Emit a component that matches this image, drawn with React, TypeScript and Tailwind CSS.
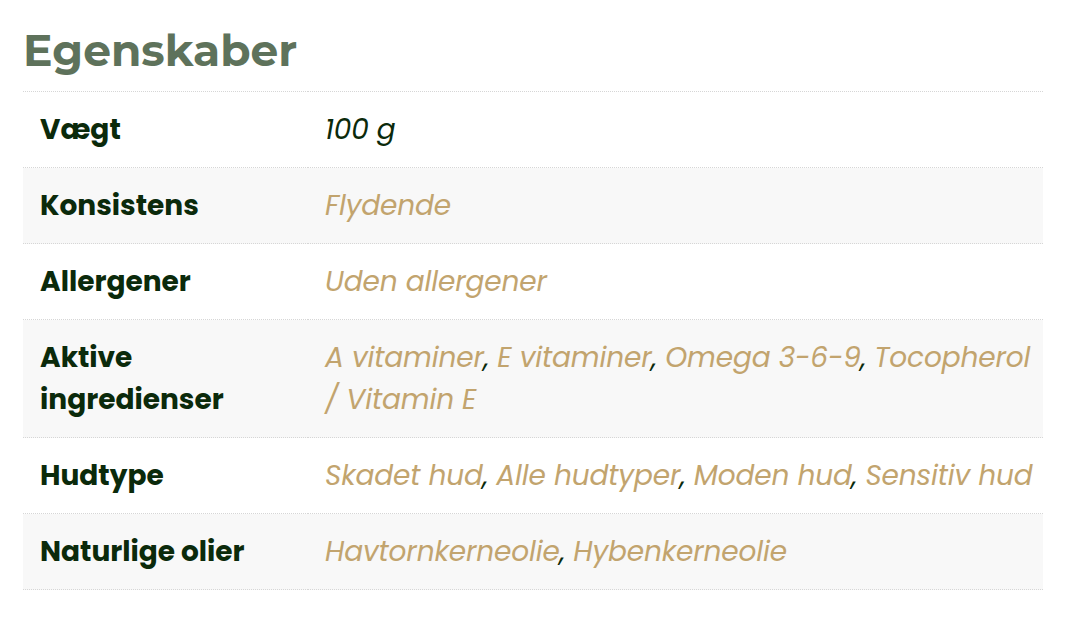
import React from 'react';

type Row = { label: string; values: string[]; plain?: boolean };

const rows: Row[] = [
  { label: 'Vægt', values: ['100 g'], plain: true },
  { label: 'Konsistens', values: ['Flydende'] },
  { label: 'Allergener', values: ['Uden allergener'] },
  { label: 'Aktive ingredienser', values: ['A vitaminer', 'E vitaminer', 'Omega 3-6-9', 'Tocopherol / Vitamin E'] },
  { label: 'Hudtype', values: ['Skadet hud', 'Alle hudtyper', 'Moden hud', 'Sensitiv hud'] },
  { label: 'Naturlige olier', values: ['Havtornkerneolie', 'Hybenkerneolie'] },
];

const App: React.FC = () => {
  return (
    <div className="min-h-screen bg-white pl-[23px] pr-[45px] pt-[22px]">
      <h2 className="text-[44px] font-bold leading-[56px] text-[#5e725b] font-['Montserrat','DejaVu_Sans',sans-serif]">
        Egenskaber
      </h2>
      <table className="mt-[13px] w-full table-fixed border-collapse font-['Poppins','DejaVu_Sans',sans-serif] text-[28px] leading-[42px]">
        <colgroup>
          <col className="w-[285px]" />
          <col />
        </colgroup>
        <tbody>
          {rows.map((row, i) => (
            <tr
              key={row.label}
              className={`border-t border-b border-dotted border-[#d6d6d6] ${i % 2 === 1 ? 'bg-[#f8f8f8]' : 'bg-white'}`}
            >
              <th className="pl-[17px] pr-[17px] pt-[17px] pb-[16px] text-left align-top font-bold text-[#0b2a0b]">
                {row.label}
              </th>
              <td className="pl-[17px] pr-0 pt-[17px] pb-[16px] align-top italic tracking-[-0.15px] text-[#0b2a0b]">
                {row.values.map((v, j) => (
                  <React.Fragment key={v}>
                    {j > 0 && <span>, </span>}
                    <span className={row.plain ? 'text-[#0b2a0b]' : 'text-[#c2a46e]'}>{v}</span>
                  </React.Fragment>
                ))}
              </td>
            </tr>
          ))}
        </tbody>
      </table>
    </div>
  );
};

export default App;
